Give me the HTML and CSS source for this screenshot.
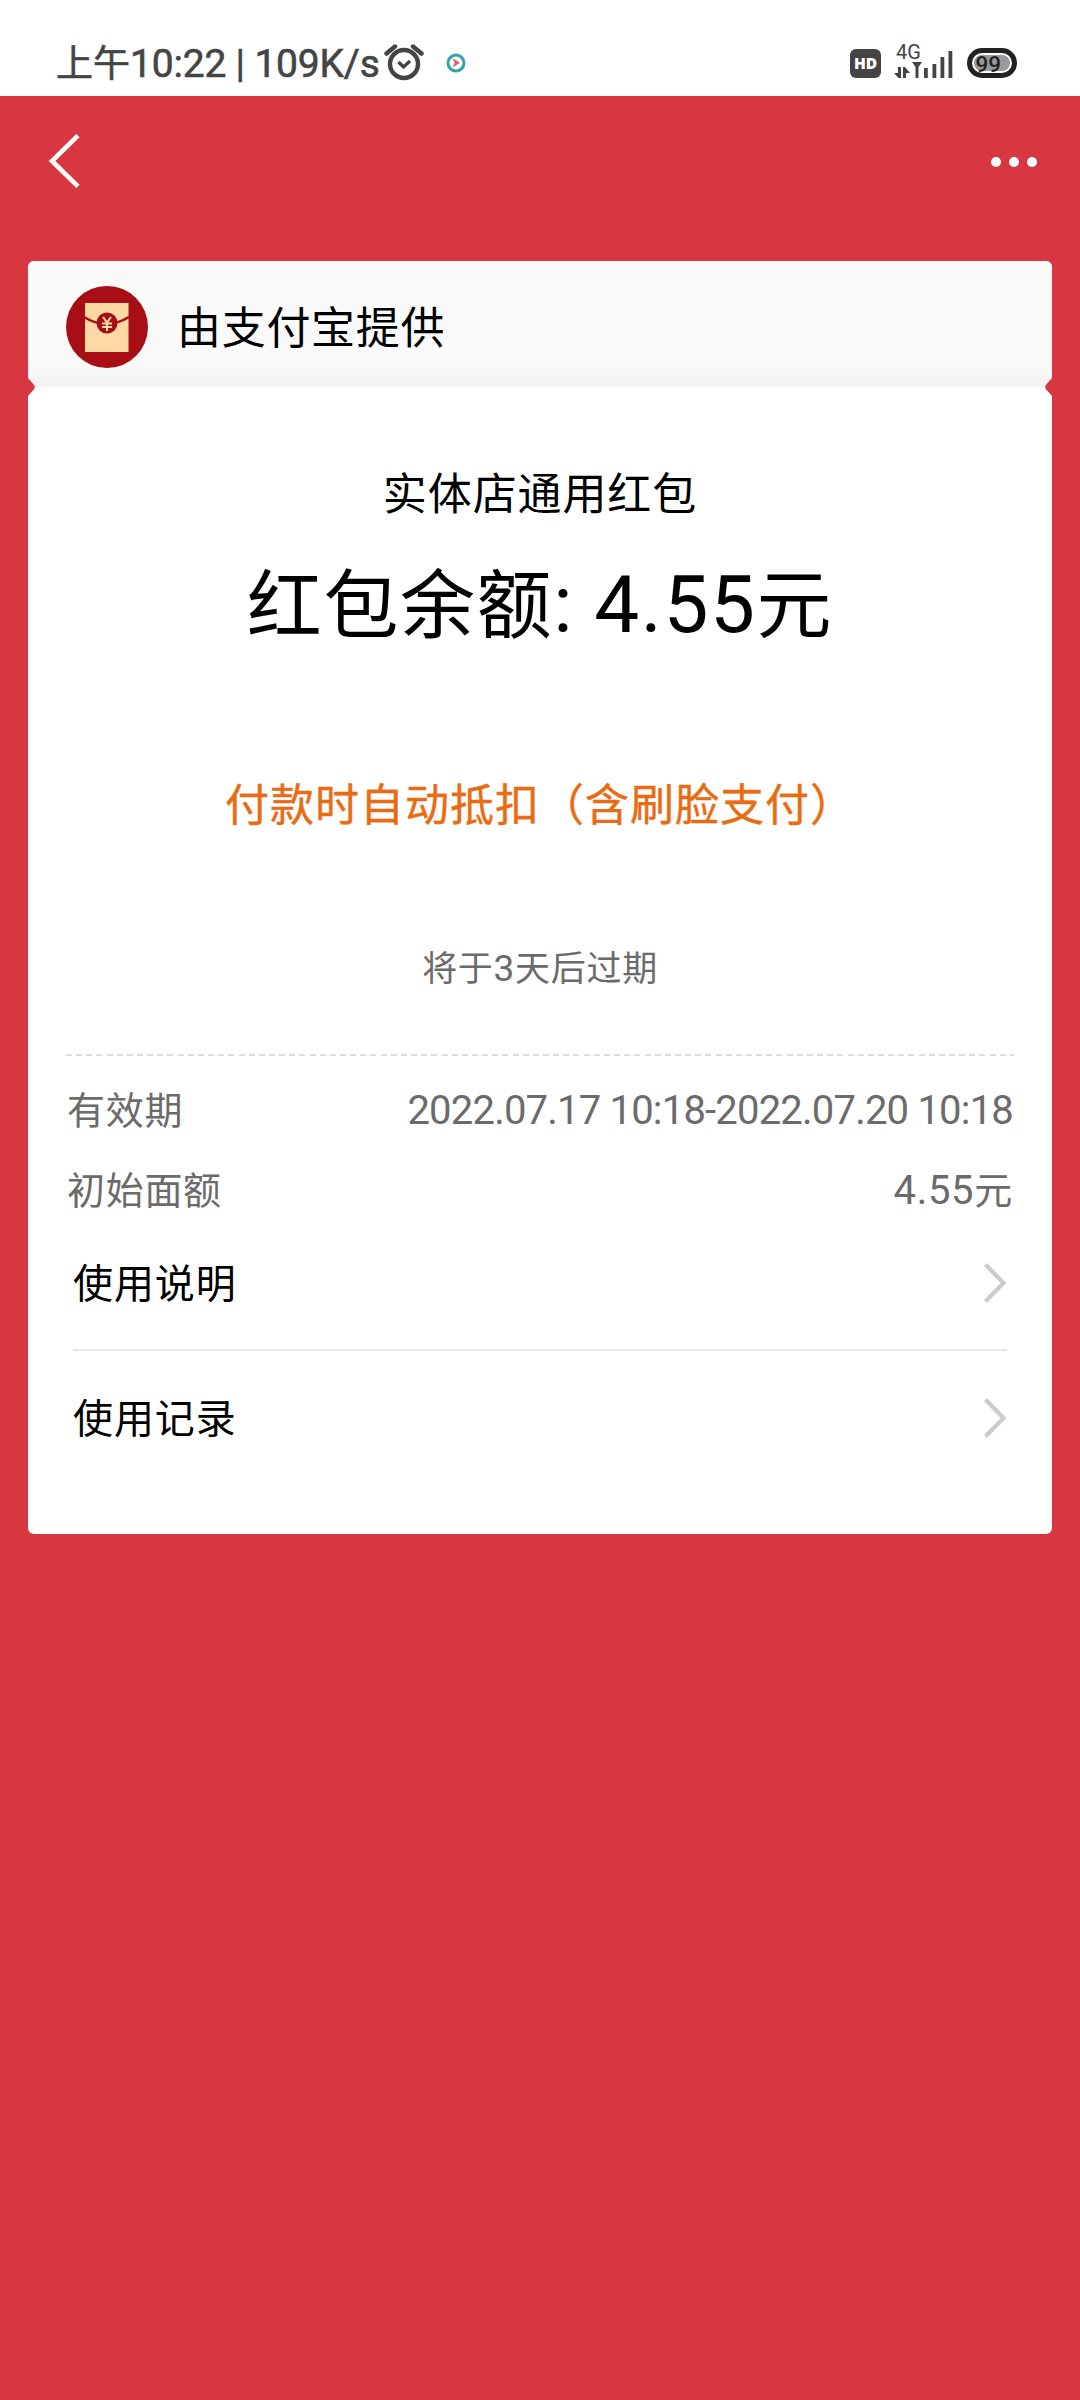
FILE: index.html
```html
<!DOCTYPE html>
<html lang="zh-CN">
<head>
<meta charset="utf-8">
<title>红包详情</title>
<link rel="stylesheet" href="styles.css">
</head>
<body>
<header class="status">
  <div class="status-left">
    <span class="clock">上午<span class="num">10:22 | 109K/s</span></span>
    <svg class="alarm" width="40" height="40" viewBox="0 0 40 40" fill="none" stroke="#444" stroke-width="4.4">
      <circle cx="20" cy="22" r="14"/>
      <path d="M2.500 11.500L11 4.500M37.500 11.500L29 4.500" stroke-linecap="round"/>
      <path d="M14.500 20L19.500 25L26 19" stroke-width="3.400"/>
    </svg>
    <svg class="play" width="22" height="22" viewBox="0 0 22 22" fill="none">
      <circle cx="11" cy="11" r="8" stroke="#35a3ad" stroke-width="3"/>
      <path d="M7.500 6L15 10.800L7.500 15.600L9.700 10.800Z" fill="#dc5b62"/>
    </svg>
  </div>
  <div class="status-right">
    <svg width="31" height="30" viewBox="0 0 31 30">
      <rect width="31" height="29" rx="6" fill="#444"/>
      <text class="hd" x="15.500" y="20.200" text-anchor="middle">HD</text>
    </svg>
    <svg class="signal" width="60" height="38" viewBox="0 0 60 38" fill="#444">
      <text class="net" x="2" y="18">4G</text>
      <path d="M4 26h3v11h-2.500L0 32h4zM9 37V26h2l5 6h-4v5z"/>
      <path d="M18 21h10l-3.500 5v11h-3v-11z"/>
      <path d="M30 27h3.800v10H30zM38.500 23h3.800v14h-3.800zM46.500 16h3.800v21h-3.800zM54.500 10h3.800v27h-3.800z"/>
    </svg>
    <svg class="battery" width="50" height="30" viewBox="0 0 50 30">
      <rect x="2.500" y="2.500" width="45" height="25" rx="12.500" fill="#fff" stroke="#222" stroke-width="5"/>
      <rect x="7" y="7" width="36" height="16" rx="8" fill="#999"/>
      <text class="level" x="21.300" y="23.500" text-anchor="middle">99</text>
    </svg>
  </div>
</header>
<nav class="bar">
  <svg width="34" height="54" viewBox="0 0 34 54" fill="none" stroke="#fff" stroke-width="4.600"><path d="M32 1.500L6 27L32 52.500"/></svg>
  <svg width="48" height="12" viewBox="0 0 48 12" fill="#fff"><circle cx="6" cy="6" r="5"/><circle cx="24" cy="6" r="5"/><circle cx="42" cy="6" r="5"/></svg>
</nav>
<main class="card">
  <div class="provider">
    <svg width="84" height="84" viewBox="0 0 84 84">
      <circle cx="42" cy="42" r="41" fill="#a80e16"/>
      <rect x="20" y="18" width="43.500" height="49" fill="#ffd9a3"/>
      <path d="M19 32Q41 46 64 32" fill="none" stroke="#a80e16" stroke-width="2.500"/>
      <circle cx="42" cy="38" r="10.500" fill="#a80e16"/>
      <path d="M38 32L42 37.500L46 32M42 37.500V46M37 38.500H47M37 42H47" fill="none" stroke="#ffd9a3" stroke-width="2"/>
    </svg>
    <span class="provider-name">由支付宝提供</span>
    <i class="notch notch-left"></i><i class="notch notch-right"></i>
  </div>
  <section class="summary">
    <h1 class="name">实体店通用红包</h1>
    <p class="balance">红包余额<span class="num colon">:</span><span class="num">4.55</span>元</p>
    <p class="tip">付款时自动抵扣（含刷脸支付）</p>
    <p class="expire">将于<span class="num">3</span>天后过期</p>
  </section>
  <div class="divider"></div>
  <dl class="info">
    <div class="row"><dt>有效期</dt><dd class="num date">2022.07.17 10:18-2022.07.20 10:18</dd></div>
    <div class="row"><dt>初始面额</dt><dd><span class="num">4.55</span>元</dd></div>
  </dl>
  <ul class="links">
    <li><span>使用说明</span><svg width="24" height="40" viewBox="0 0 24 40" fill="none" stroke="#ccc" stroke-width="4.200"><path d="M2.500 1.500L20.500 20L2.500 38.500"/></svg></li>
    <li><span>使用记录</span><svg width="24" height="40" viewBox="0 0 24 40" fill="none" stroke="#ccc" stroke-width="4.200"><path d="M2.500 1.500L20.500 20L2.500 38.500"/></svg></li>
  </ul>
</main>
</body>
</html>
```

FILE: styles.css
```css
* { box-sizing: border-box; margin: 0; padding: 0; }
body {
  min-height: 2400px;
  background: #d83640;
  color: #000;
  font-family: "Noto Sans CJK SC", sans-serif;
}
svg { display: block; flex: none; }
.num { font-family: Roboto, sans-serif; }

.status {
  display: flex;
  justify-content: space-between;
  height: 96px;
  padding: 0 63px 0 56px;
  background: #fff;
}
.status-left, .status-right { display: flex; align-items: flex-start; }
.clock {
  width: 328px;
  padding-top: 31px;
  font-size: 37px;
  line-height: 60px;
  color: #444;
  white-space: nowrap;
  -webkit-text-stroke: .6px #444;
}
.clock .num { font-size: 39px; letter-spacing: -.2px; }
.alarm { margin-top: 42px; }
.play { margin: 52px 0 0 21px; }
.status-right { padding-top: 48px; }
.hd { font: 800 15.5px "Open Sans", sans-serif; fill: #fff; }
.net { font: 20px Roboto, sans-serif; }
.level { font: 500 22.5px Roboto, sans-serif; fill: #222; }
.signal { margin: -7px 13px 0 13px; }
.status-right > svg:first-child { margin-top: 1px; }

.bar {
  display: flex;
  align-items: flex-start;
  justify-content: space-between;
  height: 165px;
  padding: 38px 42px 0 46px;
}
.bar svg:last-child { margin-top: 22px; }

.card {
  height: 1273px;
  margin: 0 28px;
  background: #fff;
  border-radius: 6px;
}
.provider {
  position: relative;
  display: flex;
  align-items: center;
  gap: 28px;
  height: 126px;
  padding: 5px 0 0 37px;
  border-radius: 6px 6px 0 0;
  background: linear-gradient(#fafafa 0 76%, #f3f3f3);
  font-size: 44px;
  letter-spacing: .7px;
}
.provider-name { padding-bottom: 4px; }
.notch {
  position: absolute;
  bottom: -9px;
  width: 7px;
  height: 18px;
  background: #d83640;
}
.notch-left { left: 0; clip-path: polygon(0 0, 85% 38%, 100% 50%, 85% 62%, 0 100%); }
.notch-right { right: 0; clip-path: polygon(100% 0, 15% 38%, 0 50%, 15% 62%, 100% 100%); }

.summary { height: 667px; padding-top: 74px; text-align: center; }
.name { font-size: 44px; font-weight: 400; line-height: 60px; letter-spacing: .9px; }
.balance { margin-top: 29px; font-size: 75px; line-height: 100px; letter-spacing: 1.6px; white-space: nowrap; }
.balance .num { font-size: 80px; }
.balance .colon { margin-right: 20px; }
.tip { margin-top: 117px; font-size: 44px; font-weight: 400; line-height: 60px; letter-spacing: 1px; color: #e96c14; -webkit-text-stroke: .4px #e96c14; }
.expire { margin-top: 109px; font-size: 35px; line-height: 50px; letter-spacing: .7px; color: #6b6b6b; }
.expire .num { font-size: 37px; }

.divider {
  height: 2px;
  margin: 0 38px;
  background: repeating-linear-gradient(90deg, #ddd 0 6px, transparent 6px 10.15px);
}
.info { height: 161px; padding: 12px 39px 0; font-size: 38px; color: #6b6b6b; }
.row { display: flex; justify-content: space-between; height: 80px; line-height: 80px; letter-spacing: .7px; }
.row .num { font-size: 40px; }
.row .date { padding-top: 3px; letter-spacing: -.8px; }

.links { list-style: none; padding: 0 45px; }
.links li {
  display: flex;
  align-items: center;
  justify-content: space-between;
  height: 134px;
  font-size: 40px;
  letter-spacing: .9px;
}
.links span { padding-bottom: 5px; }
.links li:first-child { border-bottom: 2px solid #eaeaea; }
```
